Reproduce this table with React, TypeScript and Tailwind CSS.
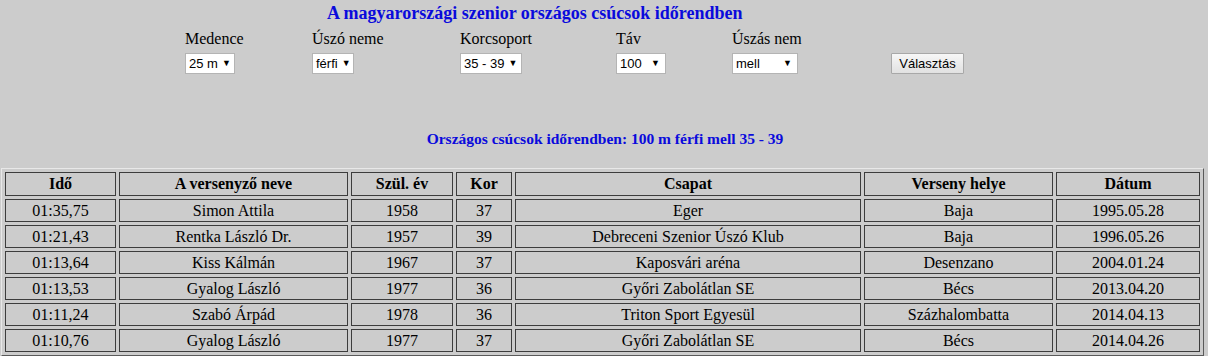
import React from "react";

const rows = [
  ["01:35,75", "Simon Attila", "1958", "37", "Eger", "Baja", "1995.05.28"],
  ["01:21,43", "Rentka László Dr.", "1957", "39", "Debreceni Szenior Úszó Klub", "Baja", "1996.05.26"],
  ["01:13,64", "Kiss Kálmán", "1967", "37", "Kaposvári aréna", "Desenzano", "2004.01.24"],
  ["01:13,53", "Gyalog László", "1977", "36", "Győri Zabolátlan SE", "Bécs", "2013.04.20"],
  ["01:11,24", "Szabó Árpád", "1978", "36", "Triton Sport Egyesül", "Százhalombatta", "2014.04.13"],
  ["01:10,76", "Gyalog László", "1977", "37", "Győri Zabolátlan SE", "Bécs", "2014.04.26"],
];

const headers = ["Idő", "A versenyző neve", "Szül. év", "Kor", "Csapat", "Verseny helye", "Dátum"];
const widths = ["w-[111px]", "w-[229px]", "w-[102px]", "w-[56px]", "w-[346px]", "w-[189px]", "w-[144px]"];

function FakeSelect({ value, width }: { value: string; width: string }) {
  return (
    <div
      className={`${width} h-[21px] bg-white border border-[#b4b4b4] flex items-center justify-between gap-[4px] pl-[3px] pr-[5px] text-[13px] text-black`}
      style={{ fontFamily: '"Liberation Sans", Arial, sans-serif' }}
    >
      <span className="whitespace-nowrap">{value}</span>
      <span className="text-[9px] leading-none">▼</span>
    </div>
  );
}

function Field({ label, value, colWidth, selWidth }: { label: string; value: string; colWidth: string; selWidth: string }) {
  return (
    <div className={`${colWidth} flex flex-col`}>
      <div className="h-[18px] leading-[18px] text-[16px] mb-[5px] mt-[1px]">{label}</div>
      <FakeSelect value={value} width={selWidth} />
    </div>
  );
}

export default function App() {
  return (
    <div
      className="w-[1208px] h-[356px] bg-[#cccccc] text-black overflow-hidden"
      style={{ fontFamily: '"Liberation Serif", "Times New Roman", serif' }}
    >
      <div className="pt-[2px] pl-[327px] h-[29px]">
        <h3 className="text-[18px] leading-[22px] font-bold text-[#0a0adc]">
          A magyarországi szenior országos csúcsok időrendben
        </h3>
      </div>

      <div className="flex pl-[185px]">
        <Field label="Medence" value="25 m" colWidth="w-[127px]" selWidth="w-[50px]" />
        <Field label="Úszó neme" value="férfi" colWidth="w-[148px]" selWidth="w-[42px]" />
        <Field label="Korcsoport" value="35 - 39" colWidth="w-[156px]" selWidth="w-[62px]" />
        <Field label="Táv" value="100" colWidth="w-[116px]" selWidth="w-[50px]" />
        <Field label="Úszás nem" value="mell" colWidth="w-[159px]" selWidth="w-[66px]" />
        <div className="flex flex-col">
          <div className="h-[24px]" />
          <button
            className="w-[73px] h-[21px] border border-[#a8a8a8] bg-gradient-to-b from-[#f7f7f7] to-[#e1e1e1] text-[13px] text-black rounded-[1px]"
            style={{ fontFamily: '"Liberation Sans", Arial, sans-serif' }}
          >
            Választás
          </button>
        </div>
      </div>

      <div className="h-[74px] flex items-end justify-center pl-[2px]">
        <div className="text-[15.5px] leading-[18px] font-bold text-[#0a0adc]">
          Országos csúcsok időrendben: 100 m férfi mell 35 - 39
        </div>
      </div>

      <div className="mt-[20px] ml-[1px]">
        <table
          className="border-separate border-spacing-[3px] border border-t-[#e8e8e8] border-l-[#e8e8e8] border-r-[#5a5a5a] border-b-[#5a5a5a] text-[16px]"
        >
          <thead>
            <tr>
              {headers.map((h, i) => (
                <th
                  key={h}
                  className={`${widths[i]} h-[24px] p-0 leading-[18px] border border-[#3c3c3c] font-bold text-center`}
                >
                  {h}
                </th>
              ))}
            </tr>
          </thead>
          <tbody>
            {rows.map((r, ri) => (
              <tr key={ri}>
                {r.map((c, ci) => (
                  <td key={ci} className="h-[23px] p-0 leading-[18px] border border-[#3c3c3c] text-center">
                    {c}
                  </td>
                ))}
              </tr>
            ))}
          </tbody>
        </table>
      </div>
    </div>
  );
}
